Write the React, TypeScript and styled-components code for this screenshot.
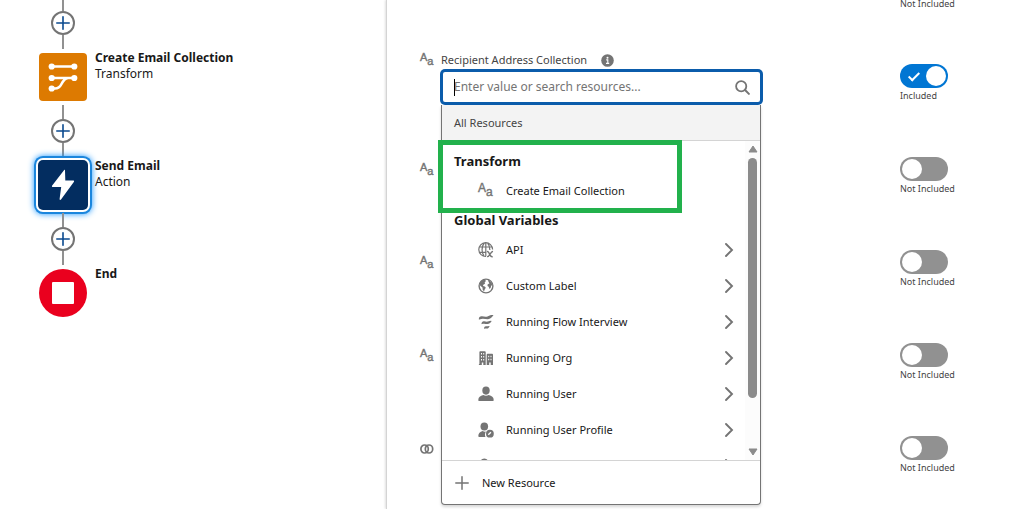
import React from "react";
import styled, { createGlobalStyle } from "styled-components";

const GlobalStyle = createGlobalStyle`
  *, *::before, *::after { box-sizing: border-box; }
  body {
    margin: 0;
    background: #fff;
    color: #181818;
    font-family: "Noto Sans", "Open Sans", sans-serif;
    font-size: 11px;
    line-height: 16px;
  }
  button, input { font: inherit; color: inherit; }
`;

const Page = styled.main`
  display: flex;
  height: 100vh;
  overflow: hidden;
`;

/* Flow canvas */

const Canvas = styled.section`
  flex: 0 0 386px;
  display: flex;
  flex-direction: column;
  align-items: flex-start;
  padding-left: 39px;
`;

const Connector = styled.div<{ $clipped?: boolean }>`
  width: 48px;
  display: flex;
  flex-direction: column;
  align-items: center;
  padding: ${(p) => (p.$clipped ? "0 0 4px" : "4px 0")};
`;

const Line = styled.span<{ $short?: boolean }>`
  width: 2px;
  height: ${(p) => (p.$short ? 11 : 14)}px;
  background: #919191;
`;

const AddButton = styled.button`
  width: 24px;
  height: 24px;
  padding: 0;
  display: grid;
  place-items: center;
  border: 2px solid #747474;
  border-radius: 50%;
  background: #fff;
`;

const Step = styled.div`
  display: flex;
  gap: 8px;
  height: 48px;
`;

const StepIcon = styled.div<{ $color: string; $round?: boolean; $selected?: boolean }>`
  width: 48px;
  height: 48px;
  display: grid;
  place-items: center;
  border-radius: ${(p) => (p.$round ? "50%" : "4px")};
  background: ${(p) => p.$color};
  box-shadow: ${(p) =>
    p.$selected
      ? `0 0 0 1px ${p.$color}, 0 0 0 3px #fff, 0 0 0 5px #1b86dd, 0 0 6px 5px #1b96ff`
      : "none"};
`;

const StepText = styled.div`
  margin-top: -3px;
  font-size: 12px;
`;

const StepTitle = styled.div`
  font-weight: 700;
`;

/* Property panel */

const Panel = styled.section`
  flex: 1;
  min-width: 0;
  padding: 0 0 0 33px;
  border-left: 1px solid #d4d4d4;
  box-shadow: -1px 0 2px rgba(0, 0, 0, 0.12);
`;

const Row = styled.div`
  display: grid;
  grid-template-columns: 21px minmax(0, 1fr) 252px;
  height: 93px;
`;

const ClippedRow = styled(Row)`
  height: 52px;
`;

const IconCell = styled.div<{ $labelled?: boolean }>`
  grid-column: 1;
  height: ${(p) => (p.$labelled ? 16 : 26)}px;
  margin-top: ${(p) => (p.$labelled ? 0 : 12)}px;
  display: flex;
  align-items: center;
`;

const ToggleCell = styled.label`
  grid-column: 3;
  padding: 12px 0 0 138px;
  display: flex;
  flex-direction: column;
  align-items: flex-start;
  gap: 2px;
`;

const ClippedCell = styled(ToggleCell)`
  padding-top: 0;
`;

const Toggle = styled.input`
  appearance: none;
  position: relative;
  flex: none;
  width: 48px;
  height: 24px;
  margin: 0;
  border-radius: 12px;
  background: #919191;
  &::before {
    content: "";
    position: absolute;
    top: 2px;
    left: 2px;
    width: 20px;
    height: 20px;
    border-radius: 50%;
    background: #fff;
  }
  &:checked { background: #0176d3; }
  &:checked::before { left: 26px; }
  &:checked::after {
    content: "";
    position: absolute;
    top: 6px;
    left: 11px;
    width: 6px;
    height: 11px;
    border: solid #fff;
    border-width: 0 2px 2px 0;
    transform: rotate(45deg);
  }
`;

const ToggleText = styled.span<{ $tight?: boolean }>`
  font-size: 9px;
  line-height: ${(p) => (p.$tight ? 8 : 12)}px;
  color: #444;
  white-space: nowrap;
`;

const Field = styled.div`
  grid-column: 2;
  position: relative;
  height: 52px;
`;

const FieldHead = styled.div`
  display: flex;
  align-items: center;
  gap: 14px;
  height: 16px;
  margin-bottom: 2px;
  color: #444;
`;

const SearchBox = styled.div`
  position: relative;
  display: flex;
  align-items: center;
  height: 34px;
  padding: 0 10px 0 11px;
  border: 2px solid #0b5cab;
  border-radius: 4px;
  box-shadow: 0 0 0 1px #0b5cab;
  background: #fff;
`;

const SearchInput = styled.input`
  flex: 1;
  min-width: 0;
  padding: 0;
  border: 0;
  outline: 0;
  background: none;
  font-size: 12px;
  &::placeholder { color: #747474; opacity: 1; }
`;

const Caret = styled.span`
  position: absolute;
  left: 11px;
  top: 7px;
  width: 1px;
  height: 17px;
  background: #000;
`;

/* Resource menu */

const Menu = styled.div`
  position: absolute;
  z-index: 1;
  top: 100%;
  left: 0;
  right: 1px;
  margin-top: 1px;
  border: 1px solid #747474;
  border-top: 0;
  border-radius: 0 0 4px 4px;
  background: #fff;
  box-shadow: 0 2px 3px rgba(0, 0, 0, 0.16);
`;

const MenuHeader = styled.div`
  height: 36px;
  padding: 10px 12px;
  border-bottom: 1px solid #d4d4d4;
  background: #f3f3f3;
  color: #444;
`;

const MenuBody = styled.div`
  display: flex;
  height: 319px;
  overflow: hidden;
`;

const List = styled.div`
  flex: 1;
  min-width: 0;
  padding-top: 9px;
`;

const GroupTitle = styled.div`
  height: 23px;
  padding-left: 12px;
  font-size: 13px;
  line-height: 23px;
  font-weight: 700;
`;

const Item = styled.button`
  width: 100%;
  height: 36px;
  padding: 0 11px 0 36px;
  display: flex;
  align-items: center;
  gap: 12px;
  border: 0;
  background: none;
  text-align: left;
`;

const ItemText = styled.span`
  flex: 1;
`;

const ScrollTrack = styled.div`
  width: 15px;
  padding: 4px 0;
  display: flex;
  flex-direction: column;
  align-items: center;
  gap: 5px;
  background: #fcfcfc;
`;

const ScrollThumb = styled.div`
  width: 9px;
  height: 240px;
  margin-bottom: auto;
  border-radius: 5px;
  background: #8b8b8b;
`;

const Footer = styled.button`
  width: 100%;
  height: 44px;
  padding: 0 12px 0 13px;
  display: flex;
  align-items: center;
  gap: 13px;
  border: 0;
  border-top: 1px solid #d4d4d4;
  background: none;
`;

const Highlight = styled.div`
  position: absolute;
  top: 35px;
  left: -4px;
  width: 244px;
  height: 73px;
  border: 5px solid #22b14c;
  pointer-events: none;
`;

/* Icons */

const Icon = styled.svg`
  display: block;
  flex: none;
`;

const TextGlyph = styled.span<{ $large?: boolean }>`
  width: 16px;
  height: 16px;
  flex: none;
  display: flex;
  align-items: flex-start;
  font-family: "Liberation Sans", sans-serif;
  font-size: ${(p) => (p.$large ? 12 : 11)}px;
  line-height: 11px;
  color: #747474;
  -webkit-text-stroke: 0.4px #747474;
  & > span:last-child { margin-top: 4px; }
`;

const TypeIcon = ({ large }: { large?: boolean }) => (
  <TextGlyph $large={large} aria-hidden="true">
    <span>A</span>
    <span>a</span>
  </TextGlyph>
);

const GREY = "#747474";

const PlusIcon = ({ size, color, stroke }: { size: number; color: string; stroke: number }) => (
  <Icon width={size} height={size} viewBox="0 0 14 14" fill="none" stroke={color} strokeWidth={stroke} strokeLinecap="round">
    <path d="M7 .8v12.4M.8 7h12.4" />
  </Icon>
);

const TransformIcon = () => (
  <Icon width="30" height="30" viewBox="0 0 30 30" fill="#fff" stroke="#fff">
    <path d="M4 4.500h22M4 16h22M4 26.500h3c3.500 0 5-1.500 6.500-4.500s3-5.500 6.500-6" fill="none" strokeWidth="2.600" />
    <g stroke="none">
      <circle cx="3.700" cy="4.500" r="3.100" />
      <circle cx="26.300" cy="4.500" r="3.100" />
      <circle cx="3.700" cy="16" r="3.100" />
      <circle cx="26.300" cy="16" r="3.100" />
      <circle cx="3.700" cy="26.500" r="3.100" />
    </g>
  </Icon>
);

const BoltIcon = () => (
  <Icon width="24" height="32" viewBox="0 0 24 32" fill="#fff">
    <path d="M13 1.200 1.200 16.500c-.6.800-.2 1.500.7 1.500h8.300l-1.600 12c-.1 1.100.8 1.400 1.400.6L22.800 13c.6-.8.200-1.500-.7-1.500h-7.800l-.3-9.900c0-.9-.5-1-1-.4z" />
  </Icon>
);

const StopIcon = () => (
  <Icon width="22" height="22" viewBox="0 0 22 22" fill="#fff">
    <rect width="22" height="22" rx="1" />
  </Icon>
);

const InfoIcon = () => (
  <Icon width="13" height="13" viewBox="0 0 13 13">
    <circle cx="6.500" cy="6.500" r="6.300" fill={GREY} />
    <circle cx="6.500" cy="3.700" r="1" fill="#fff" />
    <path d="M5.200 5.900h1.600v3.200M5 9.400h3.200" stroke="#fff" strokeWidth="1.100" fill="none" />
  </Icon>
);

const SearchIcon = () => (
  <Icon width="15" height="15" viewBox="0 0 15 15" fill="none" stroke={GREY} strokeLinecap="round">
    <circle cx="6.200" cy="6.200" r="5.100" strokeWidth="1.800" />
    <path d="m10.300 10.300 3.600 3.600" strokeWidth="2" />
  </Icon>
);

const ChevronIcon = () => (
  <Icon width="10" height="16" viewBox="0 0 10 16" fill="none" stroke={GREY} strokeWidth="1.900" strokeLinecap="round">
    <path d="m2 2 6 6-6 6" />
  </Icon>
);

const ApiIcon = () => (
  <Icon width="16" height="16" viewBox="0 0 16 16" fill="none" stroke={GREY} strokeWidth="1.200">
    <path d="M14.600 7.500A6.900 6.900 0 1 0 8 14.500M1.300 5h13M1.500 10.300h7M7.800 1v13.300M6.300 1C3.300 4.500 3.300 11 6.300 14.300M9.500 1c2 2 2.400 4 2.300 7" />
    <path d="M9 9.600c2.800-1 2.200 6 5.700 5M15 9.600c-2.500-.6-3 5.600-6 5" strokeWidth="1.400" />
  </Icon>
);

const GlobeIcon = () => (
  <Icon width="16" height="16" viewBox="0 0 16 16">
    <circle cx="8" cy="8" r="6.900" fill="none" stroke={GREY} strokeWidth="1.400" />
    <path fill={GREY} d="M1.800 4.800 4 2.300l3-.5 1 1.300-1.300 1.200.3 1.400-1.700 1-.3 1.300 1.800.5 1 1.300-1.100 1.600-.7 2.100-1.300-1.700-.2-2.200-2.300-1.800zM9.700 1.800l2 1 2.300 2.700.4 2-1.200 0-.5 2.200-1.200 1.300-.8-2.200-1.200-.9.200-1.700 1.700-.8-.9-1.600z" />
  </Icon>
);

const FlowIcon = () => (
  <Icon width="16" height="16" viewBox="0 0 16 16" fill={GREY}>
    <path d="M.8 5.200c0-1.800 1.300-3.200 3.200-2.900 2 .3 3.800 1 5.500.1C11 1.400 12.700.8 15 .9c.4 0 .5.400.2.700-1.200 1.700-3 3.500-5.200 3.600-2.600.1-5.300-1.300-8.500.3-.4.200-.7.100-.7-.3z" />
    <path d="M3.500 9.800c.1-1.700 1.100-2.700 2.600-2.500 1.500.2 2.400.7 3.800.3 1-.4 2-.8 3.200-.8.400 0 .5.300.3.600-1 1.400-2.200 2.500-3.900 2.600-1.800.1-3.300-.9-5.500.1-.3.100-.5 0-.5-.3z" />
    <path d="M6.100 14.500c0-1.600.8-2.400 2-2.300 1.200.1 1.800 0 3-.3.400-.1.600.2.400.5-.7 1.300-1.300 2-2.500 2.100-.9 0-1.500-.2-2.400.2-.3.100-.5.100-.5-.2z" />
  </Icon>
);

const OrgIcon = () => (
  <Icon width="16" height="16" viewBox="0 0 16 16" fill={GREY} fillRule="evenodd">
    <path d="M2.200 1.200h4.600c.6 0 .9.300.9.900V15H5.300v-2.500H3.800V15H.9V14h.5V2.100c0-.6.3-.9.800-.9zM3 3v1.500h1V3zm2.200 0v1.500h1V3zM3 6v1.500h1V6zm2.200 0v1.500h1V6zM3 9v1.500h1V9zm2.200 0v1.500h1V9z" />
    <path d="M9.500 3.800h4.700c.5 0 .8.300.8.900V15h-2.300v-2.500h-1.500V15H8.700V4.700c0-.6.300-.9.800-.9zM10.200 5.700v1.500h1V5.700zm2.300 0v1.500h1V5.700zm-2.300 3v1.500h1V8.700zm2.300 0v1.500h1V8.700z" />
  </Icon>
);

const UserIcon = () => (
  <Icon width="16" height="16" viewBox="0 0 16 16" fill={GREY}>
    <ellipse cx="8" cy="4.600" rx="3.700" ry="4.100" />
    <path d="M1.300 15c-.7 0-1-.4-1-1 0-2.900 2-3.900 5-4.900 1.600 1 3.800 1 5.400 0 3 1 5 2 5 4.900 0 .6-.3 1-1 1z" />
  </Icon>
);

const ProfileIcon = () => (
  <Icon width="16" height="16" viewBox="0 0 16 16">
    <ellipse cx="6.300" cy="4.400" rx="3.800" ry="4" fill={GREY} />
    <path d="M1.200 15c-.6 0-.9-.3-.9-1 0-2.700 1.700-3.900 4.400-4.900 1.200.7 2.400.7 3.400.4-1.300 1.600-1.400 3.800-.6 5.500z" fill={GREY} />
    <circle cx="11.900" cy="11.700" r="3.900" fill={GREY} />
    <path d="m10.300 12.800 2.600-2.600" stroke="#fff" strokeWidth="1.300" fill="none" />
  </Icon>
);

const LinkIcon = () => (
  <Icon width="14" height="10" viewBox="0 0 14 10" fill="none" stroke={GREY} strokeWidth="1.700">
    <ellipse cx="4.600" cy="5" rx="3.700" ry="4" />
    <ellipse cx="9" cy="5" rx="3.700" ry="4" />
  </Icon>
);

const ArrowIcon = ({ down }: { down?: boolean }) => (
  <Icon width="10" height="8" viewBox="0 0 10 8" fill="#8b8b8b" stroke="#8b8b8b" strokeLinejoin="round">
    <path d={down ? "M1 1h8L5 7z" : "M1 7h8L5 1z"} />
  </Icon>
);

/* Composition */

const AddStep = ({ clipped }: { clipped?: boolean }) => (
  <Connector $clipped={clipped}>
    <Line $short={clipped} />
    <AddButton aria-label="Add element">
      <PlusIcon size={14} color="#0b4a8f" stroke={1.6} />
    </AddButton>
    <Line />
  </Connector>
);

const IncludeToggle = ({ on }: { on?: boolean }) => (
  <ToggleCell>
    <Toggle type="checkbox" defaultChecked={on} />
    <ToggleText>{on ? "Included" : "Not Included"}</ToggleText>
  </ToggleCell>
);

const globals = [
  { label: "API", icon: <ApiIcon /> },
  { label: "Custom Label", icon: <GlobeIcon /> },
  { label: "Running Flow Interview", icon: <FlowIcon /> },
  { label: "Running Org", icon: <OrgIcon /> },
  { label: "Running User", icon: <UserIcon /> },
  { label: "Running User Profile", icon: <ProfileIcon /> },
  { label: "", icon: <ProfileIcon /> },
];

const otherFields = [<TypeIcon />, <TypeIcon />, <TypeIcon />, <LinkIcon />];

export default function App() {
  return (
    <>
      <GlobalStyle />
      <Page>
        <Canvas>
          <AddStep clipped />
          <Step>
            <StepIcon $color="#dd7a01"><TransformIcon /></StepIcon>
            <StepText>
              <StepTitle>Create Email Collection</StepTitle>
              <div>Transform</div>
            </StepText>
          </Step>
          <AddStep />
          <Step>
            <StepIcon $color="#032d60" $selected><BoltIcon /></StepIcon>
            <StepText>
              <StepTitle>Send Email</StepTitle>
              <div>Action</div>
            </StepText>
          </Step>
          <AddStep />
          <Step>
            <StepIcon $color="#ea001e" $round><StopIcon /></StepIcon>
            <StepText>
              <StepTitle>End</StepTitle>
            </StepText>
          </Step>
        </Canvas>

        <Panel>
          <ClippedRow>
            <ClippedCell as="div"><ToggleText $tight>Not Included</ToggleText></ClippedCell>
          </ClippedRow>
          <Row>
            <IconCell $labelled><TypeIcon /></IconCell>
            <Field>
              <FieldHead>
                <label htmlFor="recipients">Recipient Address Collection</label>
                <InfoIcon />
              </FieldHead>
              <SearchBox>
                <SearchInput id="recipients" type="text" placeholder="Enter value or search resources..." />
                <Caret />
                <SearchIcon />
              </SearchBox>
              <Menu>
                <MenuHeader>All Resources</MenuHeader>
                <MenuBody>
                  <List>
                    <GroupTitle>Transform</GroupTitle>
                    <Item>
                      <TypeIcon large />
                      <ItemText>Create Email Collection</ItemText>
                    </Item>
                    <GroupTitle>Global Variables</GroupTitle>
                    {globals.map((g, i) => (
                      <Item key={i}>
                        {g.icon}
                        <ItemText>{g.label}</ItemText>
                        <ChevronIcon />
                      </Item>
                    ))}
                  </List>
                  <ScrollTrack>
                    <ArrowIcon />
                    <ScrollThumb />
                    <ArrowIcon down />
                  </ScrollTrack>
                </MenuBody>
                <Footer>
                  <PlusIcon size={14} color={GREY} stroke={1.5} />
                  <span>New Resource</span>
                </Footer>
                <Highlight />
              </Menu>
            </Field>
            <IncludeToggle on />
          </Row>
          {otherFields.map((icon, i) => (
            <Row key={i}>
              <IconCell>{icon}</IconCell>
              <IncludeToggle />
            </Row>
          ))}
        </Panel>
      </Page>
    </>
  );
}
